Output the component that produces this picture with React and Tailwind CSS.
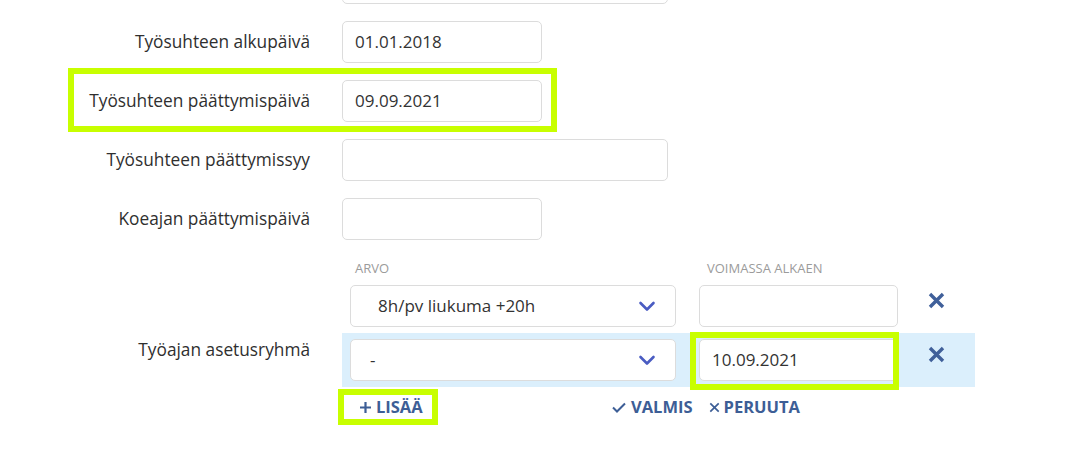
import * as React from 'react';

const font = { fontFamily: '"Open Sans", "Liberation Sans", sans-serif' };

// Yksinkertainen tekstikenttä
function Field({ value, width = 'w-[200px]' }) {
    return (
        <div className={`${width} h-[42px] shrink-0 rounded-[5px] border border-[#dcdcdc] bg-white flex items-center px-3 text-[17px] text-[#333]`}>
            {value}
        </div>
    );
}

function Chevron() {
    return (
        <svg width="18" height="11" viewBox="0 0 18 11" fill="none">
            <path d="M2.5 2 L9 8.5 L15.5 2" stroke="#4a5cc2" strokeWidth="2.6" strokeLinecap="round" strokeLinejoin="round" />
        </svg>
    );
}

function Cross({ size = 17, width = 3.4, color = '#40609a' }) {
    return (
        <svg width={size} height={size} viewBox="0 0 17 17" fill="none">
            <path d="M2 2 L15 15 M15 2 L2 15" stroke={color} strokeWidth={width} />
        </svg>
    );
}

function Select({ value, pad = 'pl-[27px]' }) {
    return (
        <div className={`w-[326px] h-[42px] shrink-0 rounded-[5px] border border-[#dcdcdc] bg-white flex items-center justify-between ${pad} pr-[19px] text-[17px] text-[#333]`}>
            <span>{value}</span>
            <Chevron />
        </div>
    );
}

function Row({ label, children }) {
    return (
        <div className="flex items-center">
            <div className="w-[310px] shrink-0 text-right text-[17.3px] text-[#2f2f2f]">{label}</div>
            <div className="ml-[32px] flex">{children}</div>
        </div>
    );
}

// Vihreä korostuskehys
function Mark({ className }) {
    return <div className={`absolute border-[6px] border-[#c8ff00] pointer-events-none ${className}`} />;
}

export default function App() {
    return (
        <div className="w-[1073px] h-[453px] overflow-hidden bg-white" style={font}>
            <div className="flex flex-col gap-[17px] -mt-[38px]">
                <Row label="">
                    <Field width="w-[326px]" />
                </Row>
                <Row label="Työsuhteen alkupäivä">
                    <Field value="01.01.2018" />
                </Row>
                <div className="relative">
                    <Row label="Työsuhteen päättymispäivä">
                        <Field value="09.09.2021" />
                    </Row>
                    <Mark className="left-[68px] w-[489px] -top-[12px] h-[64px]" />
                </div>
                <Row label="Työsuhteen päättymissyy">
                    <Field width="w-[326px]" />
                </Row>
                <Row label="Koeajan päättymispäivä">
                    <Field />
                </Row>
            </div>

            {/* Työaika-asetusten ryhmä */}
            <div className="flex mt-[21px]">
                <div className="w-[310px] shrink-0 text-right text-[17.3px] text-[#2f2f2f] pt-[76px]">Työajan asetusryhmä</div>
                <div className="ml-[32px] flex flex-col">
                    <div className="flex pl-2 h-[16px] items-center text-[13px] text-[#9b9b9b] uppercase">
                        <div className="w-[326px] pl-[5px]">Arvo</div>
                        <div className="ml-[23px] pl-[8px]">Voimassa alkaen</div>
                    </div>
                    <div className="flex items-center pl-2 mt-[8px]">
                        <Select value="8h/pv liukuma +20h" />
                        <div className="ml-[23px]"><Field width="w-[199px]" /></div>
                        <div className="w-[77px] flex justify-center mb-[12px]"><Cross /></div>
                    </div>
                    <div className="flex items-center pl-2 py-[6px] mt-[6px] bg-[#dbeffc]">
                        <Select value="-" pad="pl-[19px]" />
                        <div className="ml-[23px] relative">
                            <Field width="w-[199px]" value="10.09.2021" />
                            <Mark className="-left-[9px] -top-[7px] w-[209px] h-[58px]" />
                        </div>
                        <div className="w-[77px] flex justify-center mb-[12px]"><Cross /></div>
                    </div>
                    <div className="flex items-center h-[40px] text-[16.5px] font-bold text-[#3d5e96]">
                        <div className="relative -ml-[4px] w-[100px] h-[36px] flex items-center pl-[21px] gap-[4px]">
                            <svg width="13" height="13" viewBox="0 0 13 13" fill="none">
                                <path d="M6.5 1 V12 M1 6.5 H12" stroke="#3d5e96" strokeWidth="2.2" />
                            </svg>
                            <span>LISÄÄ</span>
                            <Mark className="inset-0" />
                        </div>
                        <div className="ml-[174px] flex items-center gap-[5px]">
                            <svg width="14" height="11" viewBox="0 0 14 11" fill="none">
                                <path d="M1 5.5 L5 9.5 L13 1.5" stroke="#3d5e96" strokeWidth="2" />
                            </svg>
                            <span>VALMIS</span>
                        </div>
                        <div className="ml-[16px] flex items-center gap-[4px]">
                            <Cross size={11} width={2.6} color="#3d5e96" />
                            <span>PERUUTA</span>
                        </div>
                    </div>
                </div>
            </div>
        </div>
    );
}
